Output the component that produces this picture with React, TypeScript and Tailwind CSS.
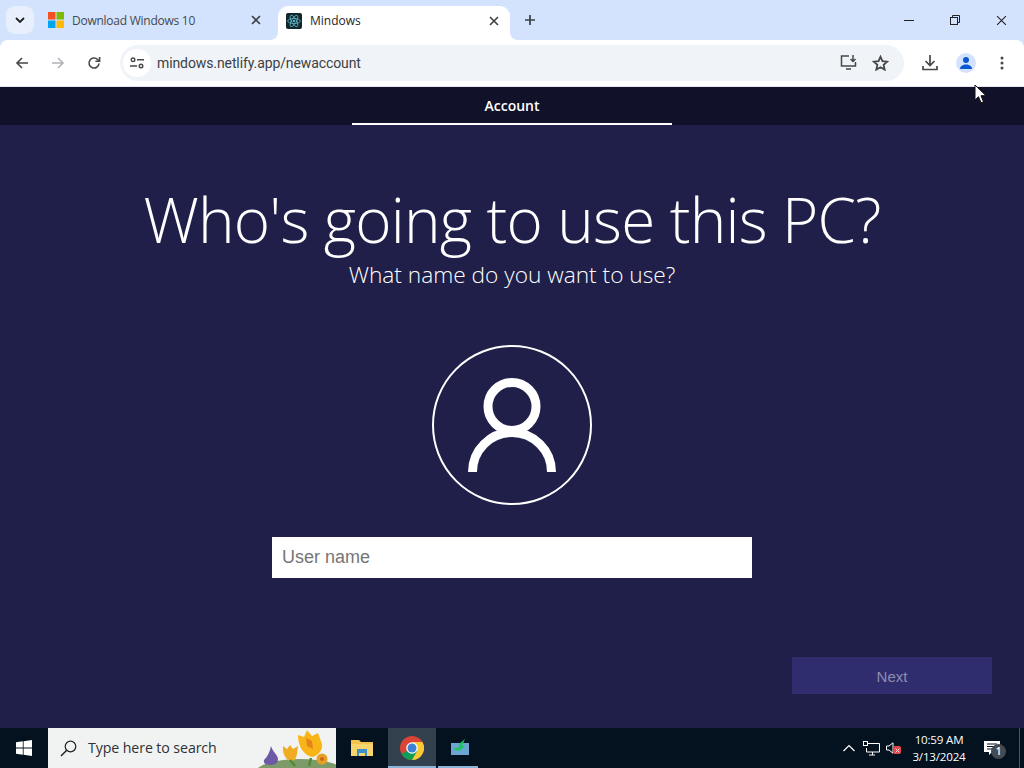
import React from "react";

const seg = "[font-family:'Open_Sans','Noto_Sans',sans-serif]";

function ReactLogo() {
  return (
    <svg width="16" height="16" viewBox="0 0 16 16" className="rounded-[2px] bg-[#12262b]">
      <g fill="none" stroke="#5fb7c9" strokeWidth="0.8">
        <ellipse cx="8" cy="8" rx="6.4" ry="2.5" />
        <ellipse cx="8" cy="8" rx="6.4" ry="2.5" transform="rotate(60 8 8)" />
        <ellipse cx="8" cy="8" rx="6.4" ry="2.5" transform="rotate(120 8 8)" />
      </g>
      <circle cx="8" cy="8" r="1.3" fill="#5fb7c9" />
    </svg>
  );
}

function MsLogo() {
  return (
    <svg width="16" height="16" viewBox="0 0 16 16">
      <rect x="0" y="0" width="7.5" height="7.5" fill="#f25022" />
      <rect x="8.5" y="0" width="7.5" height="7.5" fill="#7fba00" />
      <rect x="0" y="8.5" width="7.5" height="7.5" fill="#00a4ef" />
      <rect x="8.5" y="8.5" width="7.5" height="7.5" fill="#ffb900" />
    </svg>
  );
}

function X({ size = 10, sw = 1.6, color = "#3c4043" }: { size?: number; sw?: number; color?: string }) {
  return (
    <svg width={size} height={size} viewBox="0 0 10 10">
      <path d="M1 1L9 9M9 1L1 9" stroke={color} strokeWidth={sw} fill="none" />
    </svg>
  );
}

function TabBar() {
  return (
    <div className="relative flex h-[40px] shrink-0 items-start bg-[#d3e3fd]">
      <div className="ml-[6px] mt-[6px] flex h-[28px] w-[28px] items-center justify-center rounded-[9px] bg-[#e8f0fe]">
        <svg width="10" height="7" viewBox="0 0 10 7">
          <path d="M1 1l4 4 4-4" stroke="#1f1f1f" strokeWidth="1.8" fill="none" />
        </svg>
      </div>
      <div className="ml-[14px] mt-[12px] flex h-[16px] w-[216px] items-center">
        <MsLogo />
        <span className="ml-[8px] pt-[2px] text-[12px] tracking-[-0.25px] text-[#45494e] [font-family:'Open_Sans',sans-serif]">Download Windows 10</span>
        <span className="ml-auto mr-[3px] flex"><X /></span>
      </div>
      <div className="relative ml-[14px] mt-[6px] flex h-[34px] w-[232px] items-center rounded-t-[10px] bg-white pb-[5px] pl-[8px] pr-[11px]">
        <svg className="absolute -left-[8px] bottom-0" width="8" height="8" viewBox="0 0 8 8">
          <path d="M8 0v8H0c4 0 8-3 8-8z" fill="white" />
        </svg>
        <svg className="absolute -right-[8px] bottom-0" width="8" height="8" viewBox="0 0 8 8">
          <path d="M0 0v8h8C4 8 0 5 0 0z" fill="white" />
        </svg>
        <ReactLogo />
        <span className="ml-[8px] text-[12px] text-[#1f1f1f] [font-family:'Open_Sans',sans-serif]">Mindows</span>
        <span className="ml-auto flex"><X /></span>
      </div>
      <div className="ml-[14px] mt-[14px] flex">
        <svg width="12" height="12" viewBox="0 0 12 12">
          <path d="M6 1v10M1 6h10" stroke="#3c4043" strokeWidth="1.7" fill="none" />
        </svg>
      </div>
      <div className="ml-auto flex h-[40px] items-center">
        <div className="flex w-[46px] justify-center">
          <svg width="10" height="10" viewBox="0 0 10 10"><path d="M0 5.5h10" stroke="#222" strokeWidth="1" /></svg>
        </div>
        <div className="flex w-[46px] justify-center">
          <svg width="10" height="10" viewBox="0 0 10 10" fill="none" stroke="#222" strokeWidth="1">
            <rect x="0.5" y="2.5" width="7" height="7" />
            <path d="M2.5 2.5v-2h7v7h-2" />
          </svg>
        </div>
        <div className="flex w-[46px] justify-center">
          <X size={11} sw={1} color="#222" />
        </div>
      </div>
    </div>
  );
}

function Toolbar() {
  return (
    <div className="flex h-[47px] shrink-0 items-center rounded-t-[8px] border-b border-[#e3e6ea] bg-white pb-[1px]">
      <div className="ml-[15px] flex">
        <svg width="14" height="14" viewBox="0 0 14 14" fill="none" stroke="#474747" strokeWidth="1.6">
          <path d="M13 7H2M7 2L2 7l5 5" />
        </svg>
      </div>
      <div className="ml-[22px] flex">
        <svg width="14" height="14" viewBox="0 0 14 14" fill="none" stroke="#b0b3b7" strokeWidth="1.6">
          <path d="M1 7h11M7 2l5 5-5 5" />
        </svg>
      </div>
      <div className="ml-[22px] flex">
        <svg width="14" height="14" viewBox="0 0 14 14" fill="none" stroke="#474747" strokeWidth="1.6">
          <path d="M12 7.5A5 5 0 1 1 10.6 3.5L12.4 5" />
          <path d="M12.6 1v4.2H8.4" fill="none" />
        </svg>
      </div>
      <div className="ml-[19px] flex h-[36px] w-[784px] items-center rounded-full bg-[#f0f4f9]">
        <div className="ml-[3px] flex h-[28px] w-[28px] items-center justify-center rounded-full bg-white">
          <svg width="14" height="12" viewBox="0 0 14 12" fill="none" stroke="#474747" strokeWidth="1.4">
            <circle cx="3" cy="2.8" r="1.8" />
            <path d="M7 2.8h7M0 9h7" />
            <circle cx="11" cy="9" r="1.8" />
          </svg>
        </div>
        <span className="ml-[6px] pt-[2px] text-[14px] tracking-[-0.1px] text-[#3b3f44] [font-family:'Roboto',sans-serif]">mindows.netlify.app/newaccount</span>
        <div className="ml-auto mr-[15px] flex items-center gap-[14px]">
          <svg width="18" height="17" viewBox="0 0 18 17" fill="none" stroke="#474747" strokeWidth="1.5">
            <path d="M9 2H1.5v10h14V8" />
            <path d="M6 15h5" />
            <path d="M13 1v6M10.5 5l2.500 2.500L15.500 5" />
          </svg>
          <svg width="17" height="16" viewBox="0 0 24 23" fill="none" stroke="#474747" strokeWidth="2.6">
            <path d="M12 2.500l2.800 6.400 6.900.7-5.200 4.600 1.500 6.800-6-3.500-6 3.500 1.500-6.800-5.200-4.600 6.900-.7z" />
          </svg>
        </div>
      </div>
      <div className="ml-[18px] flex">
        <svg width="16" height="17" viewBox="0 0 16 17" fill="none" stroke="#474747" strokeWidth="1.7">
          <path d="M8 1v10M3.500 7L8 11.500 12.500 7" />
          <path d="M1 12v3.500h14V12" />
        </svg>
      </div>
      <div className="ml-[18px] flex h-[20px] w-[20px] items-center justify-center rounded-full bg-[#d3e3fd]">
        <svg width="14" height="14" viewBox="0 0 14 14" fill="#0b57d0">
          <circle cx="7" cy="4" r="3" />
          <path d="M1 13c0-3 3-4.500 6-4.500s6 1.500 6 4.500z" />
        </svg>
      </div>
      <div className="ml-[24px] flex">
        <svg width="4" height="14" viewBox="0 0 4 14" fill="#474747">
          <circle cx="2" cy="2" r="1.500" /><circle cx="2" cy="7" r="1.500" /><circle cx="2" cy="12" r="1.500" />
        </svg>
      </div>
    </div>
  );
}

function Page() {
  return (
    <div className="relative flex min-h-0 flex-1 flex-col items-center bg-[#201f4a] text-white">
      <div className="flex h-[38px] w-full shrink-0 justify-center bg-[#111129]">
        <div className="flex h-[38px] w-[320px] items-center justify-center border-b-2 border-white text-[14px] font-semibold [font-family:'Open_Sans',sans-serif]">
          Account
        </div>
      </div>
      <h1 className={`mt-[49px] text-[62px] leading-[90px] font-light tracking-[-0.8px] whitespace-nowrap ${seg}`}>Who's going to use this PC?</h1>
      <p className={`-mt-[4px] text-[22.7px] leading-[30px] font-light ${seg}`}>What name do you want to use?</p>
      <div className="mt-[55px] flex h-[160px] w-[160px] items-center justify-center rounded-full border-2 border-white">
        <svg width="88" height="94" viewBox="0 0 88 94" fill="none" stroke="white" strokeWidth="9">
          <circle cx="44" cy="28.500" r="24" />
          <path d="M4.500 94a39.500 39.500 0 0 1 79 0" />
        </svg>
      </div>
      <input
        placeholder="User name"
        className="mt-[32px] h-[41px] w-[480px] bg-white px-[10px] text-[18px] text-[#333] outline-none placeholder:text-[#757575] [font-family:'Liberation_Sans',sans-serif]"
        readOnly
      />
      <div className="mt-[79px] flex w-full justify-end pr-[32px]">
        <div className="flex h-[37px] w-[200px] items-center justify-center bg-[#302d6e] pt-[3px] text-[15px] text-[#8d8cb0] [font-family:'Liberation_Sans',sans-serif]">
          Next
        </div>
      </div>
    </div>
  );
}

function Taskbar() {
  return (
    <div className="flex h-[40px] shrink-0 items-center bg-[#04111e] text-white">
      <div className="flex w-[48px] justify-center">
        <svg width="16" height="16" viewBox="0 0 16 16" fill="white">
          <path d="M0 2.300l6.800-1v6.200H0zM7.600 1.200L16 0v7.500H7.600zM0 8.400h6.800v6.300L0 13.700zM7.600 8.400H16V16l-8.400-1.200z" />
        </svg>
      </div>
      <div className="relative flex h-[40px] w-[288px] items-center overflow-hidden bg-[#f1f3f3] pl-[12px]">
        <svg width="17" height="17" viewBox="0 0 17 17" fill="none" stroke="#222" strokeWidth="1.200">
          <circle cx="10.500" cy="6.500" r="5.300" />
          <path d="M6.700 10.300L1 16" strokeWidth="1.500" />
        </svg>
        <span className="ml-[11px] text-[14.200px] tracking-[-0.1px] text-[#2f3133] [font-family:'Open_Sans',sans-serif]">Type here to search</span>
        <svg width="84" height="40" viewBox="0 0 84 40" className="absolute right-0 top-0">
          <ellipse cx="48" cy="44" rx="44" ry="13" fill="#7d9b68" />
          <path d="M12 32c3-3 6-8 7-14 1 5 7 9 7 13 0 4-3 6-7 6s-8-1-7-5z" fill="#6d5aa6" />
          <path d="M31 18l4 3 3-4 3 4 5-3-1 8c-1 5-3 7-6 7s-9-5-8-15z" fill="#f0ac23" />
          <path d="M46 7l6 2 3-7 5 6 6-3 4 11c1 6-4 12-10 13-8-2-14-10-14-22z" fill="#f7b518" />
          <path d="M54 10l6 3 1 8-6-3z" fill="#e5821c" />
          <circle cx="70" cy="31" r="5.500" fill="#e8a024" />
          <circle cx="70" cy="31" r="2" fill="#c9651c" />
          <path d="M38 32l5 6M59 30l-2 8" stroke="#4f8a38" strokeWidth="2.500" />
        </svg>
      </div>
      <div className="relative flex h-[40px] w-[52px] items-center justify-center">
        <svg width="22" height="18" viewBox="0 0 22 18">
          <path d="M0 1h8l2 2h12v14H0z" fill="#f2c34f" />
          <rect x="0" y="5" width="22" height="12" fill="#f6d56d" />
          <rect x="6" y="10" width="10" height="7" fill="#3f8fcb" />
          <rect x="8" y="14" width="6" height="3" fill="#f6d56d" />
        </svg>
      </div>
      <div className="relative flex h-[40px] w-[48px] items-center justify-center bg-[#33404d]">
        <svg width="24" height="24" viewBox="0 0 24 24">
          <circle cx="12" cy="12" r="12" fill="#db4437" />
          <path d="M12 12L1.600 18A12 12 0 0 0 12 24a12 12 0 0 0 10.400-6z" fill="#0f9d58" />
          <path d="M12 6h10.400A12 12 0 0 1 12 24l5.200-9z" fill="#fcc934" />
          <circle cx="12" cy="12" r="5.800" fill="white" />
          <circle cx="12" cy="12" r="4.500" fill="#3b82d6" />
        </svg>
        <div className="absolute bottom-0 left-0 h-[2px] w-full bg-[#8ab4d8]" />
      </div>
      <div className="relative flex h-[40px] w-[48px] items-center justify-center pb-[3px]">
        <svg width="20" height="18" viewBox="0 0 20 18">
          <path d="M1 5h18v12H1z" fill="#6aa6cf" />
          <path d="M3 11l6-2 0-3 6-5-3 7 3 0-6 5z" fill="#21c45d" />
        </svg>
        <div className="absolute bottom-0 left-[2px] h-[2px] w-[40px] bg-[#8ab4d8]" />
      </div>
      <div className="ml-auto flex h-[40px] items-center">
        <svg width="12" height="8" viewBox="0 0 12 8" fill="none" stroke="white" strokeWidth="1.200">
          <path d="M0.500 7L6 1.500 11.500 7" />
        </svg>
        <svg className="ml-[8px]" width="17" height="15" viewBox="0 0 17 15" fill="none" stroke="white" strokeWidth="1">
          <path d="M5 2.500h11.500v8.500H3.500V7" />
          <path d="M6 14h6M9.500 11v3" />
          <rect x="0.500" y="0.500" width="4" height="4" />
        </svg>
        <span className="relative ml-[6px] flex w-[16px]">
          <svg width="10" height="12" viewBox="0 0 10 12" fill="none" stroke="white" strokeWidth="1">
            <path d="M0.500 4h2.500L7 0.800v10.400L3 8H0.500z" />
          </svg>
          <span className="absolute left-[7px] top-[4px] flex h-[8px] w-[8px] items-center justify-center rounded-[2px] bg-[#e0474c]">
            <X size={5} sw={1.500} color="white" />
          </span>
        </span>
        <div className="ml-[6px] flex w-[62px] flex-col items-center text-[11.600px] leading-[17px] tracking-[-0.2px] text-white [font-family:'Open_Sans',sans-serif]">
          <span>10:59 AM</span>
          <span>3/13/2024</span>
        </div>
        <div className="relative ml-[14px] mr-[19px] flex w-[16px]">
          <svg width="16" height="14" viewBox="0 0 16 14">
            <path d="M0 0h16v11H8l-3 3v-3H0z" fill="white" />
            <path d="M3 3h10M3 5.500h10M3 8h7" stroke="#04111e" />
          </svg>
          <span className="absolute left-[7px] top-[3px] flex h-[15px] w-[15px] items-center justify-center rounded-full bg-[#444b52] text-[10px] font-semibold text-white [font-family:'Open_Sans',sans-serif]">1</span>
        </div>
        <div className="h-[40px] w-[1px] bg-[#4a5661]" />
        <div className="w-[4px]" />
      </div>
    </div>
  );
}

export default function App() {
  return (
    <div className="relative flex h-[768px] w-[1024px] flex-col overflow-hidden bg-[#d3e3fd]">
      <TabBar />
      <Toolbar />
      <Page />
      <Taskbar />
      <svg className="absolute left-[974px] top-[84px]" width="13" height="20" viewBox="0 0 13 20">
        <path d="M1 1v15l3.500-3.300 2.500 6 2.500-1-2.500-6h5z" fill="white" stroke="#111" strokeWidth="1" />
      </svg>
    </div>
  );
}
